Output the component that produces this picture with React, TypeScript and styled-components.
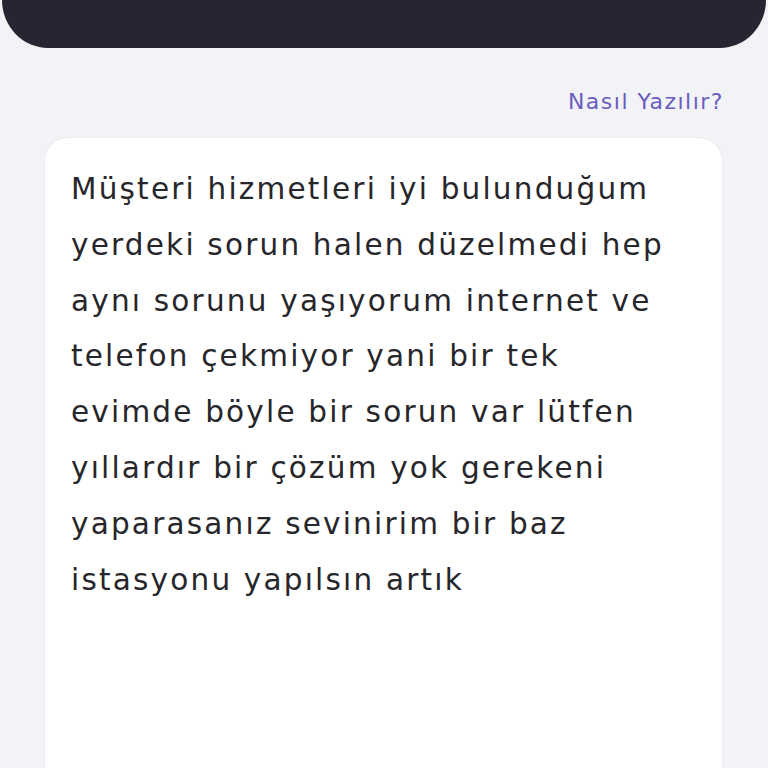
import React from 'react'
import styled, { createGlobalStyle } from 'styled-components'

const GlobalStyle = createGlobalStyle`
    html, body {
        margin: 0;
        padding: 0;
        background: #f2f3f7;
    }
    body {
        font-family: "DejaVu Sans", "Noto Sans", sans-serif;
        -webkit-font-smoothing: antialiased;
    }
`

const Page = styled('div')`
    display: flex;
    flex-direction: column;
    min-height: 768px;
    overflow: hidden;
`

const Header = styled('div')`
    background: #262633;
    height: 48px;
    margin: 0 2px;
    border-radius: 0 0 48px 48px / 0 0 50px 50px;
`

const Content = styled('div')`
    display: flex;
    flex-direction: column;
    padding: 40px 45px 0 44px;
`

const HelpRow = styled('div')`
    display: flex;
    justify-content: flex-end;
`

const HelpLink = styled('a')`
    color: #6a5cc0;
    font-size: 22px;
    line-height: 28px;
    text-decoration: none;
    letter-spacing: 1.5px;
    margin-right: -1px;
    cursor: pointer;
`

const Card = styled('div')`
    margin-top: 21px;
    background: #ffffff;
    border: 1px solid #ebecf0;
    border-radius: 24px;
    padding: 24px 38px 0 26px;
    min-height: 640px;
`

const Message = styled('p')`
    margin: 0;
    color: #26262b;
    font-size: 29.5px;
    line-height: 55.8px;
    letter-spacing: 2.2px;
`

export default function App() {
    return (
        <>
            <GlobalStyle />
            <Page>
                <Header />
                <Content>
                    <HelpRow>
                        <HelpLink>Nasıl Yazılır?</HelpLink>
                    </HelpRow>
                    <Card>
                        <Message>
                            Müşteri hizmetleri iyi bulunduğum yerdeki sorun halen düzelmedi hep aynı sorunu yaşıyorum internet ve telefon çekmiyor yani bir tek evimde böyle bir sorun var lütfen yıllardır bir çözüm yok gerekeni yaparasanız sevinirim bir baz istasyonu yapılsın artık
                        </Message>
                    </Card>
                </Content>
            </Page>
        </>
    )
}
